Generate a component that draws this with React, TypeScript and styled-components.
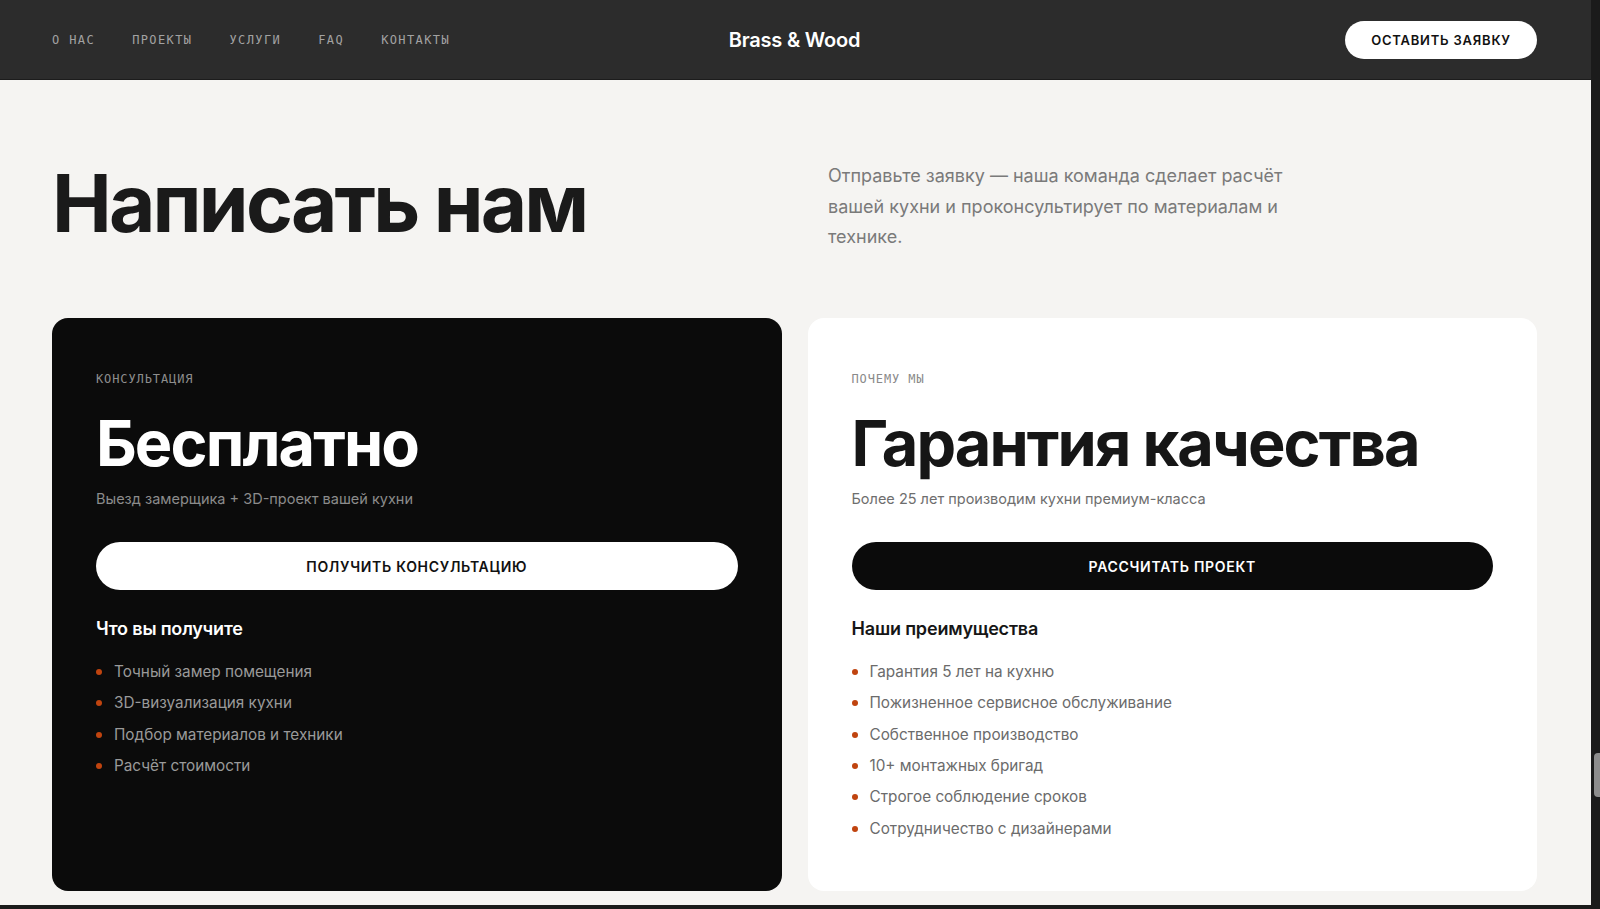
import React from "react";
import styled, { createGlobalStyle } from "styled-components";

const GlobalStyle = createGlobalStyle`
  html, body { margin: 0; padding: 0; height: 100%; overflow: hidden; }
  body { font-family: Inter, "Noto Sans", sans-serif; -webkit-font-smoothing: antialiased; }
  * { box-sizing: border-box; }
`;

const SANS = `Inter, "Noto Sans", sans-serif`;
const MONO = `"DejaVu Sans Mono", "Liberation Mono", monospace`;
const ACCENT = "#c0440f";

const Frame = styled.div`
  height: 100vh;
  display: grid;
  grid-template-rows: 1fr 4px;
  background: #1b1b1b;
`;

const Viewport = styled.div`
  display: flex;
  min-height: 0;
`;

const Page = styled.main`
  flex: 1;
  min-width: 0;
  overflow: hidden;
  background: #f5f4f2;
`;

const ScrollTrack = styled.div`
  position: relative;
  width: 9px;
  background: #1b1b1b;
`;

const ScrollThumb = styled.div`
  position: absolute;
  top: 753px;
  right: 0;
  width: 6px;
  height: 44px;
  border-radius: 4px 0 0 4px;
  background: #8d8d8d;
`;

const BottomEdge = styled.div`
  background: #1b1b1b;
`;

const Nav = styled.header`
  height: 80px;
  display: grid;
  grid-template-columns: 1fr auto 1fr;
  align-items: center;
  padding: 0 54px 0 52px;
  background: #2c2c2c;
  border-bottom: 1px solid #1c1c1c;
`;

const NavLinks = styled.nav`
  display: flex;
  align-items: center;
  gap: 37px;
`;

const NavLink = styled.a`
  font-family: ${MONO};
  font-size: 12px;
  letter-spacing: 1.4px;
  text-transform: uppercase;
  color: #a2a2a2;
  text-decoration: none;
`;

const Logo = styled.div`
  font-family: ${SANS};
  font-size: 20px;
  font-weight: 600;
  letter-spacing: -0.01em;
  color: #ffffff;
`;

const NavActions = styled.div`
  display: flex;
  justify-content: flex-end;
`;

const PillButton = styled.button<{ $variant: "light" | "dark"; $block?: boolean; $size?: "sm" | "lg" }>`
  display: inline-flex;
  align-items: center;
  justify-content: center;
  width: ${(p) => (p.$block ? "100%" : "192px")};
  height: ${(p) => (p.$size === "lg" ? "48px" : "38px")};
  border: none;
  border-radius: 999px;
  background: ${(p) => (p.$variant === "light" ? "#ffffff" : "#0b0b0b")};
  color: ${(p) => (p.$variant === "light" ? "#111111" : "#ffffff")};
  font-family: ${SANS};
  font-size: ${(p) => (p.$size === "lg" ? "14px" : "13px")};
  font-weight: 600;
  letter-spacing: ${(p) => (p.$size === "lg" ? "0.05em" : "0.06em")};
  text-transform: uppercase;
  cursor: pointer;
`;

const Hero = styled.section`
  display: grid;
  grid-template-columns: 776px 1fr;
  align-items: start;
  padding: 83px 54px 65px 52px;
`;

const Heading = styled.h1`
  margin: 0;
  font-family: ${SANS};
  font-size: 80px;
  line-height: 1;
  font-weight: 700;
  letter-spacing: -0.035em;
  color: #1a1a1a;
`;

const Lead = styled.p`
  margin: -2px 0 0;
  max-width: 460px;
  font-family: ${SANS};
  font-size: 18px;
  line-height: 1.7;
  color: #7a7a7a;
`;

const Cards = styled.section`
  display: grid;
  grid-template-columns: 1fr 1fr;
  gap: 26px;
  padding: 0 54px 0 52px;
`;

const Card = styled.article<{ $dark?: boolean }>`
  display: flex;
  flex-direction: column;
  padding: 53px 44px 50px;
  border-radius: 16px;
  background: ${(p) => (p.$dark ? "#0b0b0b" : "#ffffff")};
`;

const Eyebrow = styled.div<{ $dark?: boolean }>`
  font-family: ${MONO};
  font-size: 12px;
  line-height: 16px;
  letter-spacing: 0.9px;
  text-transform: uppercase;
  color: ${(p) => (p.$dark ? "#8e8e8e" : "#8a8a8a")};
`;

const CardTitle = styled.h2<{ $dark?: boolean }>`
  margin: 22px 0 0;
  font-family: ${SANS};
  font-size: 63px;
  line-height: 1.1;
  font-weight: 700;
  letter-spacing: -0.03em;
  color: ${(p) => (p.$dark ? "#ffffff" : "#161616")};
`;

const CardSub = styled.p<{ $dark?: boolean }>`
  margin: 11px 0 33px;
  font-family: ${SANS};
  font-size: 14.5px;
  line-height: 20px;
  color: ${(p) => (p.$dark ? "#8c8c8c" : "#6e6e6e")};
`;

const ListTitle = styled.h3<{ $dark?: boolean }>`
  margin: 27px 0 19px;
  font-family: ${SANS};
  font-size: 18px;
  line-height: 24px;
  font-weight: 600;
  letter-spacing: -0.01em;
  color: ${(p) => (p.$dark ? "#ffffff" : "#161616")};
`;

const List = styled.ul`
  margin: 0;
  padding: 0;
  list-style: none;
  display: flex;
  flex-direction: column;
  gap: 7.3px;
`;

const Item = styled.li<{ $dark?: boolean }>`
  display: flex;
  align-items: center;
  gap: 12px;
  font-family: ${SANS};
  font-size: 15.3px;
  line-height: 24px;
  color: ${(p) => (p.$dark ? "#9a9a9a" : "#6b6b6b")};
`;

const Dot = styled.span`
  flex: none;
  width: 6px;
  height: 6px;
  border-radius: 50%;
  background: ${ACCENT};
`;

const navItems = ["О нас", "Проекты", "Услуги", "FAQ", "Контакты"];

const consult = [
  "Точный замер помещения",
  "3D-визуализация кухни",
  "Подбор материалов и техники",
  "Расчёт стоимости",
];

const benefits = [
  "Гарантия 5 лет на кухню",
  "Пожизненное сервисное обслуживание",
  "Собственное производство",
  "10+ монтажных бригад",
  "Строгое соблюдение сроков",
  "Сотрудничество с дизайнерами",
];

type CardProps = {
  dark?: boolean;
  eyebrow: string;
  title: string;
  sub: string;
  cta: string;
  listTitle: string;
  items: string[];
};

function OfferCard({ dark, eyebrow, title, sub, cta, listTitle, items }: CardProps) {
  return (
    <Card $dark={dark}>
      <Eyebrow $dark={dark}>{eyebrow}</Eyebrow>
      <CardTitle $dark={dark}>{title}</CardTitle>
      <CardSub $dark={dark}>{sub}</CardSub>
      <PillButton $variant={dark ? "light" : "dark"} $block $size="lg">
        {cta}
      </PillButton>
      <ListTitle $dark={dark}>{listTitle}</ListTitle>
      <List>
        {items.map((t) => (
          <Item key={t} $dark={dark}>
            <Dot />
            {t}
          </Item>
        ))}
      </List>
    </Card>
  );
}

export default function App() {
  return (
    <>
      <GlobalStyle />
      <Frame>
        <Viewport>
          <Page>
            <Nav>
              <NavLinks>
                {navItems.map((n) => (
                  <NavLink key={n} href="#">
                    {n}
                  </NavLink>
                ))}
              </NavLinks>
              <Logo>Brass &amp; Wood</Logo>
              <NavActions>
                <PillButton $variant="light">Оставить заявку</PillButton>
              </NavActions>
            </Nav>
            <Hero>
              <Heading>Написать нам</Heading>
              <Lead>
                Отправьте заявку — наша команда сделает расчёт вашей кухни и проконсультирует по материалам и технике.
              </Lead>
            </Hero>
            <Cards>
              <OfferCard
                dark
                eyebrow="Консультация"
                title="Бесплатно"
                sub="Выезд замерщика + 3D-проект вашей кухни"
                cta="Получить консультацию"
                listTitle="Что вы получите"
                items={consult}
              />
              <OfferCard
                eyebrow="Почему мы"
                title="Гарантия качества"
                sub="Более 25 лет производим кухни премиум-класса"
                cta="Рассчитать проект"
                listTitle="Наши преимущества"
                items={benefits}
              />
            </Cards>
          </Page>
          <ScrollTrack>
            <ScrollThumb />
          </ScrollTrack>
        </Viewport>
        <BottomEdge />
      </Frame>
    </>
  );
}
